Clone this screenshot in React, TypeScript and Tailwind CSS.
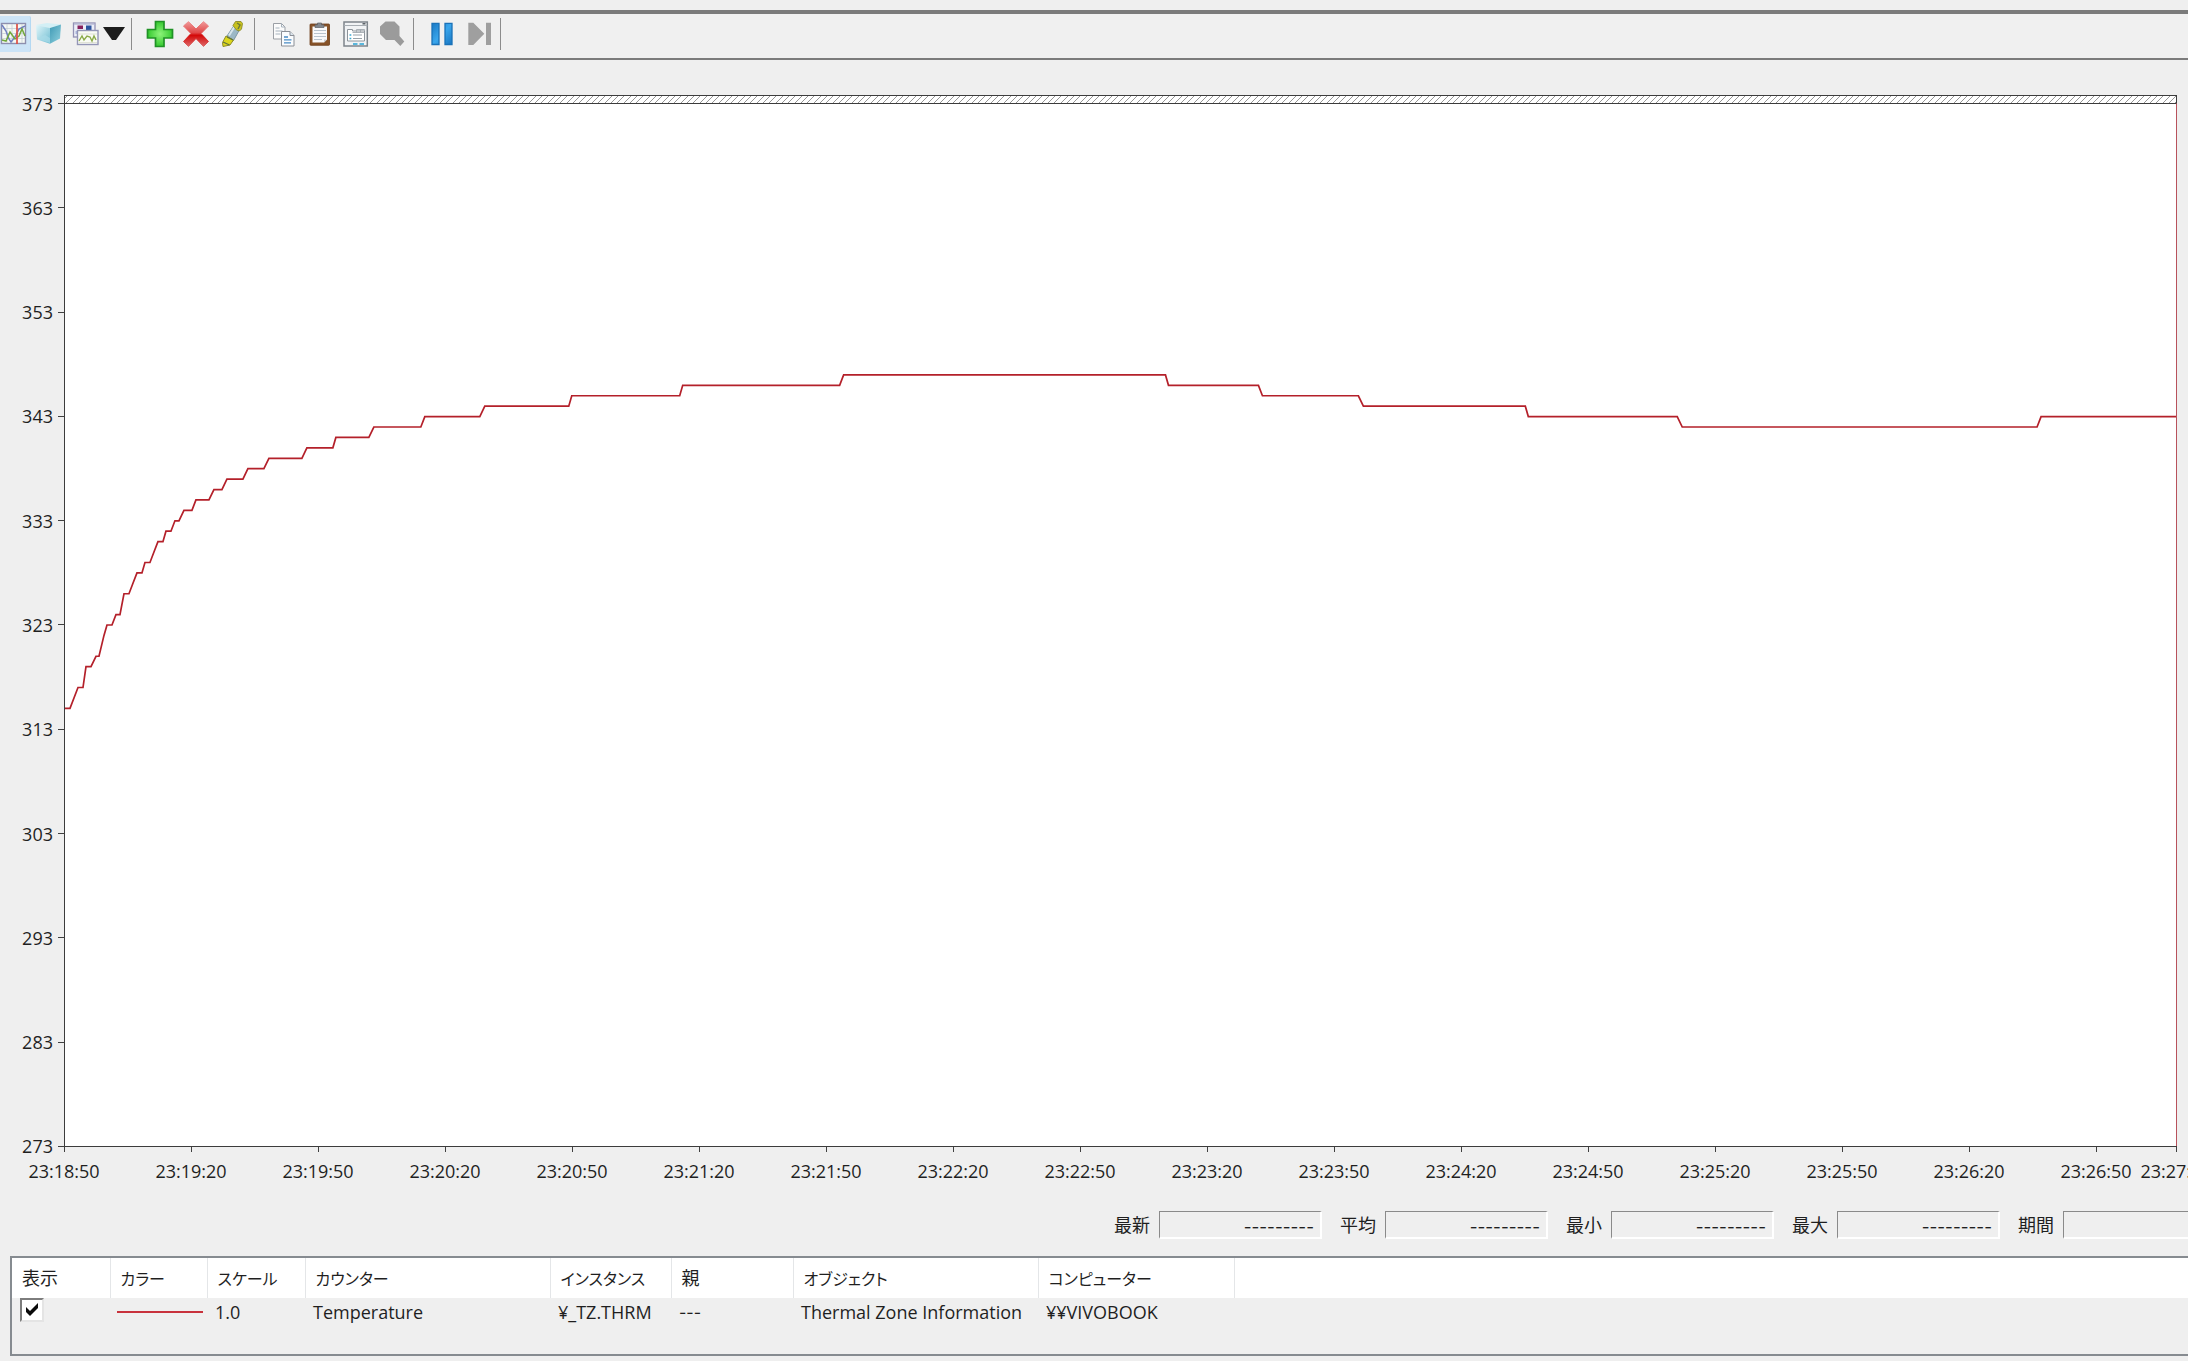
import type { ReactNode } from "react";

const Y_LABELS = [373, 363, 353, 343, 333, 323, 313, 303, 293, 283, 273];

const X_LABELS = [
  "23:18:50", "23:19:20", "23:19:50", "23:20:20", "23:20:50", "23:21:20",
  "23:21:50", "23:22:20", "23:22:50", "23:23:20", "23:23:50", "23:24:20",
  "23:24:50", "23:25:20", "23:25:50", "23:26:20", "23:26:50",
];

// [horizontal offset from the left edge of the plot, temperature in kelvin]
const SERIES: [number, number][] = [
  [0, 315], [5, 315], [13, 317], [18, 317], [21, 319], [26, 319], [31, 320], [34, 320],
  [39, 322], [42, 323], [47, 323], [51, 324], [55, 324], [59, 326], [64, 326], [68, 327],
  [72, 328], [77, 328], [80, 329], [85, 329], [89, 330], [93, 331], [98, 331], [101, 332],
  [106, 332], [110, 333], [114, 333], [119, 334], [127, 334], [131, 335], [144, 335],
  [149, 336], [157, 336], [162, 337], [178, 337], [183, 338], [199, 338], [204, 339],
  [237, 339], [242, 340], [268, 340], [271, 341], [304, 341], [309, 342], [356, 342],
  [360, 343], [415, 343], [420, 344], [504, 344], [507, 345], [615, 345], [618, 346],
  [775, 346], [779, 347], [1101, 347], [1104, 346], [1194, 346], [1198, 345],
  [1294, 345], [1299, 344], [1461, 344], [1464, 343], [1613, 343], [1618, 342],
  [1973, 342], [1977, 343], [2112, 343],
];

const LINE = SERIES.map(([x, v]) => `${x},${(373 - v) * 10}`).join(" ");

function Icon({ children }: { children: ReactNode }) {
  return (
    <svg viewBox="0 0 28 28" className="size-7 shrink-0" aria-hidden="true">
      {children}
    </svg>
  );
}

function ToolButton({ label, children }: { label: string; children: ReactNode }) {
  return (
    <button type="button" aria-label={label} className="flex h-9 w-9 shrink-0 items-center justify-center">
      {children}
    </button>
  );
}

function Separator() {
  return <div className="mr-2.5 ml-1 h-8 w-px shrink-0 bg-[#8c8c8c]" />;
}

function Toolbar() {
  return (
    <div role="toolbar" className="flex items-center border-t-4 border-b-2 border-[#7b7b7b] bg-[#f0f0f0] pt-0.5 pb-1.5">
      <button
        type="button"
        aria-label="現在のアクティビティの表示"
        className="flex h-9 w-[31px] shrink-0 items-center rounded-r-xs border-r border-[#b4d8f2] bg-[#cce4f7]"
      >
        <Icon>
          <rect x="1.5" y="3.5" width="24" height="20" fill="#f6f9f4" stroke="#8d8fae" strokeWidth="1.4" />
          <path d="M2 8.5h23M2 13.5h23M2 18.5h23M7 4v19M12 4v19M22 4v19" stroke="#c5cfd6" strokeWidth="0.8" />
          <path d="M2 5l4 6 3 8 2 3 4-5 4-8 6-3" fill="none" stroke="#6f7fc0" strokeWidth="1.5" />
          <path d="M2 20l4 1 4-9 5 7 4-3 3-7 3 7" fill="none" stroke="#72a83c" strokeWidth="1.5" />
          <path d="M17 4v20" stroke="#dd4f44" strokeWidth="1.7" />
        </Icon>
      </button>
      <ToolButton label="ログ データの表示">
        <Icon>
          <defs>
            <linearGradient id="cubeL" x1="0" y1="0" x2="1" y2="1">
              <stop offset="0" stopColor="#e2f6fa" />
              <stop offset="1" stopColor="#6fbdd2" />
            </linearGradient>
            <linearGradient id="cubeR" x1="0" y1="0" x2="1" y2="1">
              <stop offset="0" stopColor="#3f9ab5" />
              <stop offset="1" stopColor="#8fd0de" />
            </linearGradient>
          </defs>
          <path d="M1 5l11-2 14 1.5L15 8z" fill="#d3eff5" />
          <path d="M1 5l14 3v15.7L2 19.5z" fill="url(#cubeL)" />
          <path d="M15 8l11-3.5-1 14-10 5.2z" fill="url(#cubeR)" />
          <path d="M3 18l7-3 5 3v5L3 19z" fill="#a9dce8" opacity="0.7" />
        </Icon>
      </ToolButton>
      <button type="button" aria-label="グラフの種類の変更" className="flex h-9 w-[60px] shrink-0 items-center pl-1">
        <Icon>
          <rect x="2.5" y="3" width="21.5" height="14" fill="#eceef8" stroke="#9391b4" strokeWidth="1.3" />
          <path d="M3 4h20.5" stroke="#b7b8d3" strokeWidth="1.4" />
          <rect x="6.5" y="5.5" width="5.5" height="3.5" fill="#86205c" />
          <rect x="15" y="5.5" width="5.5" height="5" fill="#2c559f" />
          <rect x="4.5" y="11" width="3" height="3" fill="#aab6dd" />
          <rect x="6.5" y="10.5" width="20.5" height="14" fill="#f9fbf4" stroke="#9395b6" strokeWidth="1.4" />
          <path d="M8 14h18M8 22.5h18" stroke="#d9dccf" strokeWidth="0.8" />
          <path d="M8 21l3-5 2 4 3-4 3 1 2 4 2-5 2 4" fill="none" stroke="#8bab49" strokeWidth="1.4" />
        </Icon>
        <svg viewBox="0 0 22 14" className="ml-1 h-3.5 w-[22px] shrink-0" aria-hidden="true">
          <path d="M0 0h22L13 13H9z" fill="#1c1c1c" />
        </svg>
      </button>
      <Separator />
      <ToolButton label="追加">
        <Icon>
          <defs>
            <radialGradient id="plus">
              <stop offset="0" stopColor="#8df37a" />
              <stop offset="1" stopColor="#35c92f" />
            </radialGradient>
          </defs>
          <path d="M9.5 1.5h8.5v8h8.5v8.5h-8.5v8.5H9.5V18H1.5V9.5h8z" fill="url(#plus)" stroke="#209226" strokeWidth="1.7" />
        </Icon>
      </ToolButton>
      <ToolButton label="削除">
        <Icon>
          <defs>
            <linearGradient id="cross" x1="0" y1="0" x2="0" y2="1">
              <stop offset="0" stopColor="#f09a9a" />
              <stop offset="0.45" stopColor="#e04848" />
              <stop offset="0.55" stopColor="#d40808" />
              <stop offset="1" stopColor="#dd6a6a" />
            </linearGradient>
          </defs>
          <path
            d="M6.5 1.5L14 9l7.5-7.5L26.500 6 19 13.5l7.5 8-5 5L14 18.5 6.5 26.5 1.5 21.5 9 13.5 1.5 6z"
            fill="url(#cross)"
            stroke="url(#cross)"
            strokeLinejoin="round"
          />
        </Icon>
      </ToolButton>
      <ToolButton label="強調表示">
        <Icon>
          <path d="M9 16l8-12 6 3-7.5 13.5z" fill="#9cb8c6" stroke="#7c97a5" />
          <path d="M11 15.5l6-9.500" stroke="#d8e6ec" strokeWidth="2" />
          <path d="M15 5.5l2.500-4h5.500l1.500 2-1 5.500-2 2-3-1z" fill="#c9c21d" stroke="#8a8a2a" strokeWidth="0.9" />
          <path d="M19 3l3 2-2 4" fill="none" stroke="#6d7b3b" strokeWidth="1.5" />
          <path d="M8 16l7.5 4-3.500 5-7 1.500-.500-4z" fill="#dcd61c" stroke="#8d8b25" />
          <path d="M5 22l6.500 3M9 17l6 3" stroke="#5f7040" strokeWidth="1.2" />
        </Icon>
      </ToolButton>
      <Separator />
      <ToolButton label="プロパティのコピー">
        <Icon>
          <path d="M4.5 3.5h8l3.5 3.5v12H4.5z" fill="#fbfbfb" stroke="#9b9fa5" />
          <path d="M12.5 3.5V7H16M6.5 8h4M6.5 11h7M6.5 14h5" fill="none" stroke="#a7b3be" />
          <path d="M12.5 11.5h8.5l4 4v10.5H12.5z" fill="#fafcfe" stroke="#8b8f96" />
          <path d="M21 11.5v4h4" fill="#dbe5ee" stroke="#8b8f96" />
          <path d="M15 17h4M15 19.8h7.5M15 22.8h7" stroke="#4a8bc4" strokeWidth="1.3" />
        </Icon>
      </ToolButton>
      <ToolButton label="カウンターの一覧の貼り付け">
        <Icon>
          <rect x="5" y="4" width="19.5" height="21.3" rx="0.8" fill="#875328" stroke="#6c3e19" strokeWidth="0.8" />
          <path d="M7.5 6.5h14.5v13l-3 3H7.5z" fill="#f8f9fa" />
          <path d="M9 10.5h12M9 13.5h12M9 16.5h12M9 19.5h8" stroke="#b9c4cd" />
          <path d="M22 19.5h-3v3z" fill="#c8ced3" />
          <path d="M10 7.5V4.8h2.5V3h4v1.8H19v2.7z" fill="#82878d" stroke="#5b5f64" strokeWidth="0.7" />
        </Icon>
      </ToolButton>
      <ToolButton label="プロパティ">
        <Icon>
          <rect x="3" y="2" width="23.3" height="24" fill="#f1f3f5" stroke="#7d848b" strokeWidth="1.5" />
          <path d="M3 5.5h23.3" stroke="#a7adb3" />
          <path d="M21.5 3.8h3" stroke="#4d545b" strokeWidth="1.4" />
          <path d="M6.5 21V9.5h5V11h12v10z" fill="#fff" stroke="#8d949b" />
          <path d="M11.5 12.5h12M15.5 9.5v3M19.5 9.5v3M15.5 9.5h8V11" fill="none" stroke="#a1a8af" strokeWidth="0.9" />
          <path d="M12 15h9M12 18.5h9" stroke="#9aa2a9" strokeWidth="1.1" />
          <path d="M8.5 15h1.8M8.5 18.5h1.8" stroke="#3ba7cf" strokeWidth="1.5" />
          <path d="M12 24h4.5M18.5 24h4.5" stroke="#59b6dc" strokeWidth="2.2" />
        </Icon>
      </ToolButton>
      <ToolButton label="拡大">
        <Icon>
          <path d="M8.5 1.5h9l5 5v9.5l4.8 5.5-4 4.5-5.8-6H9L3 14V6.5z" fill="#9b9b9b" />
        </Icon>
      </ToolButton>
      <Separator />
      <ToolButton label="表示の固定">
        <Icon>
          <defs>
            <linearGradient id="pause" x1="0" y1="0" x2="1" y2="1">
              <stop offset="0" stopColor="#1878c4" />
              <stop offset="0.5" stopColor="#3aa6ec" />
              <stop offset="1" stopColor="#1876c2" />
            </linearGradient>
          </defs>
          <path d="M4 3.3h7v21.2H4zM17 3.3h7v21.2h-7z" fill="url(#pause)" stroke="#1a72b8" strokeWidth="1.3" />
        </Icon>
      </ToolButton>
      <ToolButton label="データの更新">
        <Icon>
          <path d="M4.3 2.7h5l11 11L9.3 25h-5zM22 2.7h5V25h-5z" fill="#9f9f9f" />
        </Icon>
      </ToolButton>
      <Separator />
    </div>
  );
}

function Chart() {
  return (
    <div className="flex flex-1 flex-col pt-[35px] pr-[11px]">
      <div className="flex flex-1">
        <ul className="mt-2 flex w-16 shrink-0 flex-col justify-between">
          {Y_LABELS.map((v) => (
            <li key={v} className="flex h-px items-center justify-end gap-[5px]">
              <span>{v}</span>
              <span className="h-px w-1.5 bg-[#404040]" />
            </li>
          ))}
        </ul>
        <div className="flex flex-1 flex-col border border-r-0 border-[#3c3c3c] bg-white">
          <svg className="h-[7px] w-full shrink-0 border-r border-[#3c3c3c]" aria-hidden="true">
            <defs>
              <pattern id="hatch" width="19" height="7" patternUnits="userSpaceOnUse">
                <path d="M-6 8l9-9M0 8l9-9M7 8l9-9M13 8l9-9" stroke="#8a8a8a" strokeWidth="0.9" />
              </pattern>
            </defs>
            <rect width="100%" height="7" fill="url(#hatch)" />
          </svg>
          <div className="flex flex-1 border-t border-r border-t-[#3c3c3c] border-r-[#b8525c]">
            <svg
              viewBox="0 0 2112 1000"
              preserveAspectRatio="none"
              className="h-0 min-h-full w-full"
              role="img"
              aria-label="Temperature"
            >
              <polyline points={LINE} fill="none" stroke="#b4202a" strokeWidth="1.7" vectorEffect="non-scaling-stroke" />
            </svg>
          </div>
        </div>
      </div>
      <div className="flex pl-16">
        {X_LABELS.map((t, i) => (
          <div key={t} className={i === 16 ? "w-0 grow-[80]" : "w-0 grow-[127]"}>
            <div className="h-[5px] w-px bg-[#404040]" />
            <div className="mt-[7px] w-fit -translate-x-1/2">{t}</div>
          </div>
        ))}
        <div className="w-px">
          <div className="h-[5px] w-px bg-[#404040]" />
          <div className="mt-[7px] w-fit -translate-x-1/2">23:27:09</div>
        </div>
      </div>
    </div>
  );
}

function Stat({ id, label, value }: { id: string; label: string; value: string }) {
  return (
    <div className="flex shrink-0 items-center gap-[9px]">
      <label htmlFor={id}>{label}</label>
      <input
        id={id}
        readOnly
        defaultValue={value}
        className="h-7 w-[163px] border-t border-r-2 border-b-2 border-l border-t-[#8a8a8a] border-r-white border-b-white border-l-[#8a8a8a] bg-transparent pt-1 pr-1.5 text-right font-[Inter,sans-serif] text-[17px]"
      />
    </div>
  );
}

const TH = "border-r border-[#e4e6e8] pl-2.5 text-left font-normal";
const KANA = "text-base [font-feature-settings:'palt']";

function CounterList() {
  return (
    <div className="mt-[17px] mb-[5px] ml-2.5 h-[100px] border-2 border-r-0 border-[#868b90]">
      <table className="w-full table-fixed border-collapse">
        <colgroup>
          <col className="w-[98px]" />
          <col className="w-[97px]" />
          <col className="w-[98px]" />
          <col className="w-[245px]" />
          <col className="w-[121px]" />
          <col className="w-[122px]" />
          <col className="w-[245px]" />
          <col className="w-[196px]" />
          <col />
        </colgroup>
        <thead className="bg-white">
          <tr className="h-10">
            <th className={TH}>表示</th>
            <th className={TH}><span className={KANA}>カラー</span></th>
            <th className={TH}><span className={KANA}>スケール</span></th>
            <th className={TH}><span className={KANA}>カウンター</span></th>
            <th className={TH}><span className={KANA}>インスタンス</span></th>
            <th className={TH}>親</th>
            <th className={TH}><span className={KANA}>オブジェクト</span></th>
            <th className={TH}><span className={KANA}>コンピューター</span></th>
            <td />
          </tr>
        </thead>
        <tbody>
          <tr className="h-7">
            <td className="pl-2 align-top">
              <label className="relative block size-6">
                <input
                  type="checkbox"
                  defaultChecked
                  aria-label="表示"
                  className="peer block size-6 appearance-none border-2 border-t-[#7d7d7d] border-r-[#e4e4e4] border-b-[#e4e4e4] border-l-[#7d7d7d] bg-white"
                />
                <svg viewBox="0 0 24 24" className="pointer-events-none absolute inset-0 hidden size-6 peer-checked:block" aria-hidden="true">
                  <path d="M6 9l4 4 8-8v5l-8 8-4-4z" fill="#0a0a0a" />
                </svg>
              </label>
            </td>
            <td className="pl-[7px]">
              <div className="h-0.5 w-[86px] bg-[#c8323c]" />
            </td>
            <td className="pl-2">1.0</td>
            <td className="pl-2">Temperature</td>
            <td className="pl-2">¥_TZ.THRM</td>
            <td className="pl-2 font-[Inter,sans-serif] text-base">---</td>
            <td className="pl-2 whitespace-nowrap">Thermal Zone Information</td>
            <td className="pl-2">¥¥VIVOBOOK</td>
            <td />
          </tr>
        </tbody>
      </table>
    </div>
  );
}

export default function App() {
  return (
    <div className="flex min-h-screen flex-col overflow-hidden bg-[#efefef] pt-2.5 font-['Open_Sans','Noto_Sans_CJK_JP',sans-serif] text-[18px] leading-6 text-[#1f1f1f]">
      <Toolbar />
      <Chart />
      <div className="mt-7 -mr-[38px] flex gap-[18px] self-end">
        <Stat id="last" label="最新" value="---------" />
        <Stat id="avg" label="平均" value="---------" />
        <Stat id="min" label="最小" value="---------" />
        <Stat id="max" label="最大" value="---------" />
        <Stat id="span" label="期間" value="" />
      </div>
      <CounterList />
    </div>
  );
}
